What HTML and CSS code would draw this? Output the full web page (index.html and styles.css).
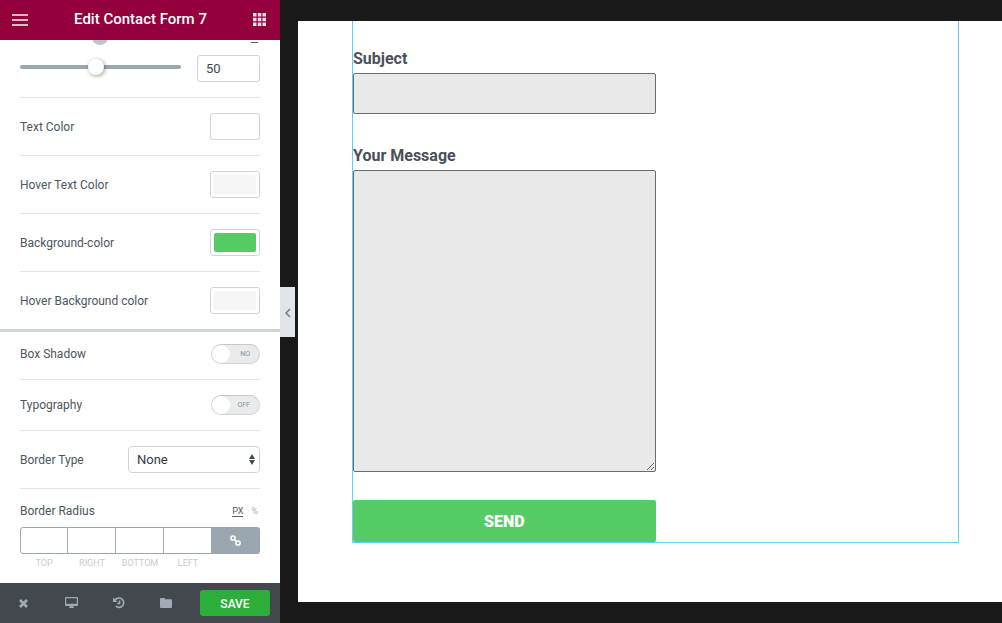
FILE: index.html
```html
<!DOCTYPE html>
<html lang="en">
<head>
<meta charset="utf-8">
<meta name="viewport" content="width=device-width, initial-scale=1">
<title>Edit Contact Form 7</title>
<link rel="stylesheet" href="styles.css">
</head>
<body>
<aside class="panel">
  <header class="panel-header">
    <button class="icon-button" type="button" aria-label="Menu">
      <svg width="16" height="12" viewBox="0 0 16 12" fill="currentColor"><rect width="16" height="2"/><rect y="5" width="16" height="2"/><rect y="10" width="16" height="2"/></svg>
    </button>
    <h1 class="panel-title">Edit Contact Form 7</h1>
    <button class="icon-button icon-button-bright" type="button" aria-label="Widgets">
      <svg width="13" height="14" viewBox="0 0 13 14" fill="currentColor"><path d="M0 0h3.500v3.500H0zM4.800 0h3.500v3.500H4.800zM9.500 0h3.500v3.500H9.500zM0 4.800h3.500v3.500H0zM4.800 4.800h3.500v3.500H4.800zM9.500 4.800h3.500v3.500H9.500zM0 9.500h3.500v3.500H0zM4.800 9.500h3.500v3.500H4.800zM9.500 9.500h3.500v3.500H9.500z"/></svg>
    </button>
  </header>

  <main class="controls">
    <div class="slider-control">
      <div class="slider-head">
        <span class="device-dot"></span>
        <span class="units"><button class="unit" type="button">PX</button><button class="unit unit-active" type="button">%</button></span>
      </div>
      <div class="slider-row">
        <input class="slider" type="range" min="0" max="100" value="47" aria-label="Width">
        <input class="number" type="text" value="50" aria-label="Width value">
      </div>
    </div>
    <div class="control"><span class="label">Text Color</span><button class="swatch" type="button" aria-label="Text Color"><span class="swatch-fill swatch-white"></span></button></div>
    <div class="control"><span class="label">Hover Text Color</span><button class="swatch" type="button" aria-label="Hover Text Color"><span class="swatch-fill"></span></button></div>
    <div class="control"><span class="label">Background-color</span><button class="swatch" type="button" aria-label="Background-color"><span class="swatch-fill swatch-green"></span></button></div>
    <div class="control"><span class="label">Hover Background color</span><button class="swatch" type="button" aria-label="Hover Background color"><span class="swatch-fill"></span></button></div>
    <div class="control control-section"><label class="label" for="shadow">Box Shadow</label><span class="switch"><input class="switch-input" id="shadow" type="checkbox"><span class="switch-text">NO</span></span></div>
    <div class="control"><label class="label" for="typography">Typography</label><span class="switch"><input class="switch-input" id="typography" type="checkbox"><span class="switch-text">OFF</span></span></div>
    <div class="control">
      <label class="label" for="border-type">Border Type</label>
      <span class="select-wrap">
        <select class="select" id="border-type"><option>None</option><option>Solid</option><option>Double</option><option>Dotted</option><option>Dashed</option></select>
        <svg class="select-arrows" width="6" height="11" viewBox="0 0 6 11" fill="currentColor"><path d="M3 0l3 5H0zM0 6h6l-3 5z"/></svg>
      </span>
    </div>
    <div class="control control-stacked">
      <div class="control-head">
        <span class="label">Border Radius</span>
        <span class="units"><button class="unit unit-active" type="button">PX</button><button class="unit" type="button">%</button></span>
      </div>
      <div class="dimensions">
        <input class="dimension" id="top" type="text">
        <input class="dimension" id="right" type="text">
        <input class="dimension" id="bottom" type="text">
        <input class="dimension" id="left" type="text">
        <button class="link-button" type="button" aria-label="Link values together">
          <svg width="11" height="11" viewBox="0 0 11 11" fill="none" stroke="currentColor" stroke-width="1.5"><circle cx="3" cy="3" r="2.1"/><circle cx="8" cy="8" r="2.1"/><path d="M4 4l3 3"/></svg>
        </button>
        <label class="dimension-label" for="top">TOP</label>
        <label class="dimension-label" for="right">RIGHT</label>
        <label class="dimension-label" for="bottom">BOTTOM</label>
        <label class="dimension-label" for="left">LEFT</label>
      </div>
    </div>
  </main>

  <footer class="panel-footer">
    <button class="tool" type="button" aria-label="Close"><svg width="9" height="9" viewBox="0 0 9 9" fill="none" stroke="currentColor" stroke-width="2.800"><path d="M1 1l7 7M8 1L1 8"/></svg></button>
    <button class="tool" type="button" aria-label="Responsive mode"><svg width="13" height="12" viewBox="0 0 13 12" fill="currentColor"><path fill-rule="evenodd" d="M1 0h11a1 1 0 0 1 1 1v7a1 1 0 0 1-1 1H8l.5 1.200H9V11H4v-.8h.5L5 9H1a1 1 0 0 1-1-1V1a1 1 0 0 1 1-1zm.2 1.200v5.600h10.600V1.200z"/></svg></button>
    <button class="tool" type="button" aria-label="History"><svg width="12" height="12" viewBox="0 0 12 12" fill="none" stroke="currentColor" stroke-width="1.700"><path d="M2 3.200A4.700 4.700 0 1 1 2.800 9.200M6.500 3.500v3H4.300"/><path fill="currentColor" stroke="none" d="M0 .6v4.400h4.400z"/></svg></button>
    <button class="tool" type="button" aria-label="Library"><svg width="12" height="10" viewBox="0 0 12 10" fill="currentColor"><path d="M1.300 0h2.600c.7 0 1.200.5 1.200 1.300h5.600c.8 0 1.300.5 1.300 1.200v6.200c0 .8-.5 1.300-1.300 1.300H1.300C.5 10 0 9.500 0 8.700V1.300C0 .5.5 0 1.300 0z"/></svg></button>
    <button class="save" type="button">SAVE</button>
  </footer>
  <button class="collapse" type="button" aria-label="Hide panel"><svg width="6" height="10" viewBox="0 0 6 10" fill="none" stroke="currentColor" stroke-width="1.500"><path d="M5 1L1 5l4 4"/></svg></button>
</aside>

<section class="preview">
  <div class="page">
    <form class="widget">
      <div class="field"><label class="field-label" for="subject">Subject</label><input class="field-input" id="subject" type="text"></div>
      <div class="field field-last"><label class="field-label" for="message">Your Message</label><textarea class="field-input field-message" id="message"></textarea></div>
      <button class="send" type="button">SEND</button>
    </form>
  </div>
</section>
</body>
</html>
```
FILE: styles.css
```css
* { box-sizing: border-box; }

body {
  margin: 0;
  display: flex;
  height: 100vh;
  overflow: hidden;
  background: #191919;
  font-family: Roboto, "Liberation Sans", sans-serif;
}

button, input, select, textarea {
  margin: 0;
  padding: 0;
  border: 0;
  border-radius: 0;
  background: none;
  color: inherit;
  font: inherit;
}

svg { display: block; }

.panel {
  position: relative;
  flex: 0 0 280px;
  display: flex;
  flex-direction: column;
  background: #fff;
  color: #4c565e;
  font-size: 12px;
  font-weight: 400;
}

.panel-header {
  flex: 0 0 40px;
  display: flex;
  align-items: center;
  padding: 0 14px 0 12px;
  background: #93003c;
  color: #fff;
}

.icon-button {
  display: flex;
  color: #e0b8c8;
}

.icon-button-bright { color: #f3e1e9; }

.panel-title {
  flex: 1;
  margin: 0;
  padding-bottom: 2px;
  font-size: 15px;
  font-weight: 500;
  text-align: center;
}

.controls {
  flex: 1;
  min-height: 0;
  display: flex;
  flex-direction: column;
  justify-content: flex-end;
  overflow: hidden;
}

.slider-control { padding: 0 20px 15px; }

.slider-head {
  display: flex;
  align-items: center;
  justify-content: space-between;
  height: 16px;
  margin-bottom: 10px;
}

.device-dot {
  width: 16px;
  height: 16px;
  margin-left: 72px;
  border-radius: 50%;
  background: #bcc5cb;
}

.slider-row {
  display: flex;
  align-items: flex-start;
  gap: 16px;
}

.slider {
  appearance: none;
  flex: 1;
  min-width: 0;
  height: 24px;
}

.slider::-webkit-slider-runnable-track {
  height: 4px;
  border-radius: 4px;
  background: #9ba7b0;
}

.slider::-webkit-slider-thumb {
  appearance: none;
  width: 16px;
  height: 16px;
  margin-top: -6px;
  border-radius: 50%;
  background: #fff;
  box-shadow: 1px 1px 4px rgba(0, 0, 0, 0.4);
}

.number {
  width: 63px;
  height: 27px;
  padding: 0 8px;
  border: 1px solid #d0d3d9;
  border-radius: 3px;
  color: #40474d;
  font-size: 13px;
}

.control {
  display: flex;
  align-items: center;
  justify-content: space-between;
  padding: 15px 0;
  margin: 0 20px;
  border-top: 1px solid #e3e4e6;
}

.control-section {
  margin: 0;
  padding: 12px 20px 15px;
  border-top: 3px solid #d0d5dc;
}

.control-stacked {
  display: block;
  padding-bottom: 14px;
}

.swatch {
  width: 50px;
  height: 27px;
  padding: 3px;
  border: 1px solid #d0d3d9;
  border-radius: 3px;
}

.swatch-fill {
  display: block;
  height: 19px;
  border-radius: 2px;
  background: #f5f5f5;
}

.swatch-white { background: #fff; }
.swatch-green { background: #54cb64; }

.switch {
  display: grid;
  align-items: center;
  width: 49px;
  height: 20px;
}

.switch-input,
.switch-text { grid-area: 1 / 1; }

.switch-input {
  appearance: none;
  width: 49px;
  height: 20px;
  border: 1px solid #d3d5d8;
  border-top-color: #c6c9cc;
  border-radius: 10px;
  background: #e9ebec;
}

.switch-input::before {
  content: "";
  display: block;
  width: 18px;
  height: 18px;
  border-radius: 50%;
  background: #fff;
}

.switch-text {
  padding-right: 10px;
  color: #84929c;
  font-size: 7px;
  text-align: right;
  pointer-events: none;
}

.select-wrap {
  display: grid;
  align-items: center;
  width: 132px;
}

.select,
.select-arrows { grid-area: 1 / 1; }

.select {
  appearance: none;
  width: 100%;
  height: 27px;
  padding: 0 8px;
  border: 1px solid #d0d3d9;
  border-radius: 4px;
  color: #34393d;
  font-size: 13px;
}

.select-arrows {
  justify-self: end;
  margin-right: 5px;
  color: #40474d;
  pointer-events: none;
}

.control-head {
  display: flex;
  align-items: center;
  justify-content: space-between;
  height: 14px;
  margin-bottom: 9px;
}

.units {
  display: flex;
  gap: 8px;
  padding-right: 2px;
  font-size: 9px;
  line-height: 10px;
}

.unit {
  border-bottom: 1px solid transparent;
  color: #a4afb7;
}

.unit-active {
  border-color: #556068;
  color: #4c565e;
}

.dimensions {
  display: grid;
  grid-template-columns: repeat(5, 1fr);
  row-gap: 3px;
}

.dimension {
  min-width: 0;
  height: 27px;
  padding: 0 4px;
  border: 1px solid #9ba7b0;
  border-left-width: 0;
  text-align: center;
}

.dimension:first-child {
  border-left-width: 1px;
  border-radius: 3px 0 0 3px;
}

.link-button {
  display: grid;
  place-items: center;
  padding-right: 1px;
  border-radius: 0 3px 3px 0;
  background: #9ba7b0;
  color: #fff;
}

.dimension-label {
  color: #c6ccd2;
  font-size: 9px;
  line-height: 12px;
  text-align: center;
}

.panel-footer {
  flex: 0 0 40px;
  display: flex;
  align-items: center;
  padding-right: 10px;
  background: #42484e;
  color: #a0acb4;
}

.tool {
  flex: 1;
  display: grid;
  place-items: center;
  height: 40px;
}

.save {
  width: 70px;
  height: 26px;
  margin-left: 10px;
  padding-top: 2px;
  border-radius: 3px;
  background: #2dae3b;
  color: #fff;
  font-weight: 500;
}

.collapse {
  position: absolute;
  top: 287px;
  left: 100%;
  display: grid;
  place-items: center;
  width: 15px;
  height: 50px;
  padding-top: 2px;
  background: #e1e5e9;
  color: #6d7882;
}

.preview {
  flex: 1;
  min-width: 0;
  padding: 21px 0 21px 18px;
}

.page {
  height: 100%;
  padding: 0 43px 59px 54px;
  background: #fff;
}

.widget {
  height: 100%;
  padding-top: 28px;
  border: 1px solid #62cff4;
  border-top: 0;
}

.field {
  width: 50%;
  margin-bottom: 32px;
}

.field-last { margin-bottom: 28px; }

.field-label {
  display: block;
  color: #4b4f58;
  font-size: 16px;
  font-weight: 700;
  line-height: 20px;
  padding-bottom: 4px;
}

.field-input {
  display: block;
  width: 100%;
  height: 41px;
  padding: 8px;
  border: 1px solid #6b6b6b;
  border-radius: 2px;
  background: #e9e9e9;
}

.field-message { height: 302px; }

.send {
  display: block;
  width: 50%;
  height: 42px;
  border-radius: 2px;
  background: #54cb64;
  color: #fff;
  font-size: 16px;
  font-weight: 900;
}
```
